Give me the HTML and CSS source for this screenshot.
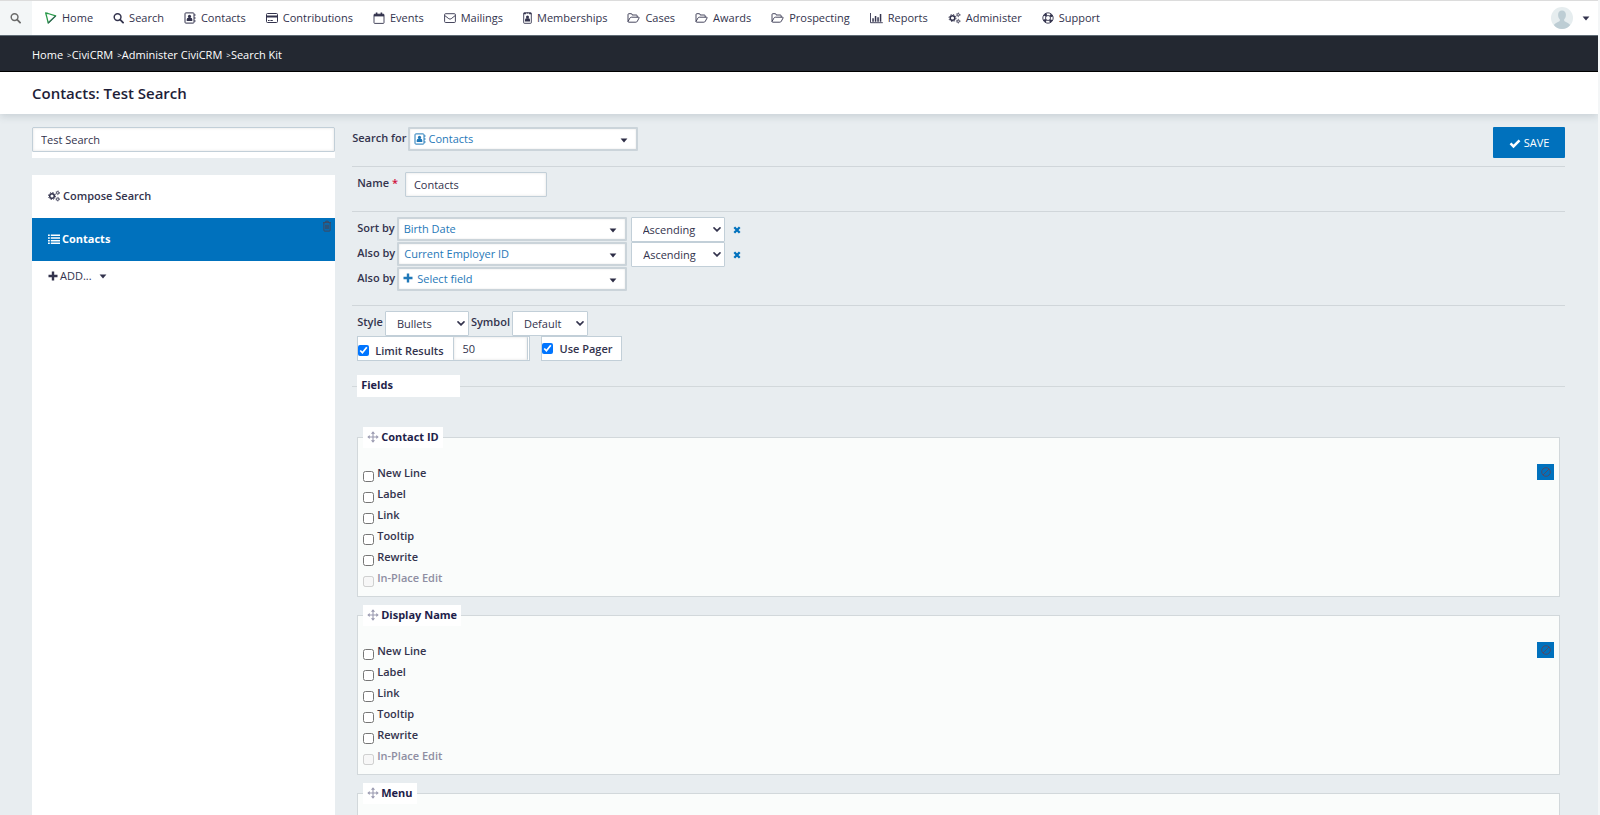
FILE: index.html
```html
<!DOCTYPE html>
<html lang="en">
<head>
<meta charset="utf-8">
<meta name="viewport" content="width=device-width, initial-scale=1">
<title>Contacts: Test Search</title>
<link rel="stylesheet" href="styles.css">
</head>
<body>
	<svg class="sprite" aria-hidden="true">
		<symbol id="i-search" viewBox="0 0 12 12"><circle cx="5" cy="5" r="3.7" fill="none" stroke="currentColor" stroke-width="1.6"/><path d="M7.8 7.8l3.2 3.2" fill="none" stroke="currentColor" stroke-width="2" stroke-linecap="round"/></symbol>
		<symbol id="i-contact" viewBox="0 0 12 12"><rect x="1" y=".9" width="9" height="10.2" rx=".8" fill="none" stroke="currentColor"/><path d="M10.9 2.2v1.6M10.9 5.2v1.6M10.9 8.2v1.6" stroke="currentColor"/><circle cx="5.5" cy="4.4" r="1.6" fill="currentColor"/><path d="M2.7 9V7.6q0-1.6 1.5-1.8h2.6q1.5.2 1.5 1.8V9z" fill="currentColor"/></symbol>
		<symbol id="i-card" viewBox="0 0 12 12"><rect x=".5" y="1.5" width="11" height="9" rx="1" fill="none" stroke="currentColor"/><path d="M.5 3.6h11v2H.5zM2 8h1.6v1H2zM4.4 8h2.4v1H4.4z" fill="currentColor"/></symbol>
		<symbol id="i-calendar" viewBox="0 0 12 12"><rect x="1" y="2.2" width="10" height="9.2" rx=".7" fill="none" stroke="currentColor" stroke-width=".9"/><path d="M1 2.2h10v2.2H1z" fill="currentColor"/><path d="M3.6.6v2.6M8.4.6v2.6" stroke="currentColor" stroke-width="1.6"/></symbol>
		<symbol id="i-mail" viewBox="0 0 12 12"><rect x=".6" y="1.7" width="10.8" height="8.8" rx="1" fill="none" stroke="currentColor" stroke-width=".9"/><path d="M.8 3.6l4 3.1q1.2.9 2.4 0l4-3.1" fill="none" stroke="currentColor" stroke-width=".9"/></symbol>
		<symbol id="i-badge" viewBox="0 0 9 12"><rect x=".7" y=".8" width="7.6" height="10.5" rx=".6" fill="none" stroke="currentColor" stroke-width=".9"/><path d="M.7.8h2.2v1.4H.7zM6.1.8h2.2v1.4H6.1zM3.6.6h1.8v1H3.6z" fill="currentColor"/><circle cx="4.5" cy="5" r="1.5" fill="currentColor"/><path d="M2 9.4V8q0-1.5 1.3-1.7h2.4Q7 6.500 7 8v1.400z" fill="currentColor"/></symbol>
		<symbol id="i-folder" viewBox="0 0 13 12"><path d="M1 9.500V2.600q0-.9.900-.9h2.300q.9 0 .9.900v.4h4.200q.9 0 .9.900v1.300M1 9.500l1.900-3.400q.5-.9 1.400-.9h7.200q1 0 .5.900L10.300 9.300q-.5.900-1.400.9H1.800Q1 10.200 1 9.500z" fill="none" stroke="currentColor" stroke-width=".9" stroke-linejoin="round"/></symbol>
		<symbol id="i-chart" viewBox="0 0 13 12"><path d="M.5 1v9.700h12.300" fill="none" stroke="currentColor" stroke-width=".9"/><path d="M2.300 6.300h1.500v3.400H2.300zM4.800 4h1.500v5.700H4.800zM7.300 5.200h1.500v4.500H7.300zM9.800 2h1.500v7.700H9.800z" fill="currentColor"/></symbol>
		<symbol id="i-cogs" viewBox="0 0 12 12"><circle cx="4" cy="6" r="2.300" fill="none" stroke="currentColor" stroke-width="1.500"/><circle cx="4" cy="6" r="3.500" fill="none" stroke="currentColor" stroke-width="1" stroke-dasharray="1.375 1.375"/><circle cx="9.700" cy="2.800" r="1.200" fill="none" stroke="currentColor" stroke-width=".9"/><circle cx="9.700" cy="2.800" r="1.900" fill="none" stroke="currentColor" stroke-width=".6" stroke-dasharray="1 1"/><circle cx="9.700" cy="9.200" r="1.200" fill="none" stroke="currentColor" stroke-width=".9"/><circle cx="9.700" cy="9.200" r="1.900" fill="none" stroke="currentColor" stroke-width=".6" stroke-dasharray="1 1"/></symbol>
		<symbol id="i-ring" viewBox="0 0 12 12"><circle cx="6" cy="6" r="5.200" fill="none" stroke="currentColor" stroke-width=".9"/><circle cx="6" cy="6" r="2.500" fill="none" stroke="currentColor" stroke-width=".9"/><circle cx="6" cy="6" r="3.900" fill="none" stroke="currentColor" stroke-width="2.600" stroke-dasharray="2.600 3.526" stroke-dashoffset="-1.763"/></symbol>
		<symbol id="i-list" viewBox="0 0 12 12"><path d="M0 1.500h1.800V3H0zM2.800 1.500H12V3H2.800zM0 4.200h1.800v1.500H0zM2.800 4.200H12v1.500H2.800zM0 6.900h1.800v1.500H0zM2.800 6.900H12v1.500H2.800zM0 9.600h1.800v1.500H0zM2.800 9.600H12v1.500H2.800z" fill="currentColor"/></symbol>
		<symbol id="i-plus" viewBox="0 0 10 10"><path d="M5 .5v9M.5 5h9" stroke="currentColor" stroke-width="2.400"/></symbol>
		<symbol id="i-trash" viewBox="0 0 10 12"><path d="M1 2.700h8M3.300 2.500l.5-1.300h2.400l.5 1.300M1.900 2.900v7.400q0 .8.800.8h4.600q.8 0 .8-.8V2.900M3.800 4.700v4.500M5 4.700v4.500M6.200 4.700v4.500" fill="none" stroke="currentColor" stroke-width=".9"/></symbol>
		<symbol id="i-check" viewBox="0 0 12 12"><path d="M1.500 6.400l3 3 6-6" fill="none" stroke="currentColor" stroke-width="2.500"/></symbol>
		<symbol id="i-caret" viewBox="0 0 8 5"><path d="M.6.400h6.800L4 4.400z" fill="currentColor"/></symbol>
		<symbol id="i-chevron" viewBox="0 0 8 5"><path d="M1 .9l3 3 3-3" fill="none" stroke="currentColor" stroke-width="1.600" stroke-linecap="round"/></symbol>
		<symbol id="i-times" viewBox="0 0 8 8"><path d="M1.300 1.300l5.400 5.400M6.700 1.300L1.300 6.700" stroke="currentColor" stroke-width="2.300"/></symbol>
		<symbol id="i-move" viewBox="0 0 12 12"><path d="M6 2v8M2 6h8" stroke="currentColor" stroke-width="1.100"/><path d="M6 .3l2.100 2.400H3.900zM6 11.700l2.100-2.400H3.900zM.3 6l2.400-2.100v4.200zM11.700 6L9.300 3.900v4.200z" fill="currentColor"/></symbol>
		<symbol id="i-ban" viewBox="0 0 12 12"><circle cx="6" cy="6" r="4.300" fill="none" stroke="currentColor"/><path d="M3 9l6-6" stroke="currentColor"/></symbol>
	</svg>

	<header>
		<nav class="menubar">
			<button class="quicksearch" aria-label="Quick search"><svg class="icon small"><use href="#i-search"/></svg></button>
			<ul class="menu">
				<li><a href="#"><svg class="icon logo" viewBox="0 0 12 12"><path d="M1.200 1l2.300.5 7.700 2.400-7.500 7.100-1.200-5.100z" fill="none" stroke="#2a9a4a" stroke-width="1.300" stroke-linejoin="round"/><path d="M11.200 3.900l-7.500 7.100" stroke="#3a6a5a" stroke-width="1.300"/></svg>Home</a></li>
				<li><a href="#"><svg class="icon small"><use href="#i-search"/></svg>Search</a></li>
				<li><a href="#"><svg class="icon"><use href="#i-contact"/></svg>Contacts</a></li>
				<li><a href="#"><svg class="icon"><use href="#i-card"/></svg>Contributions</a></li>
				<li><a href="#"><svg class="icon"><use href="#i-calendar"/></svg>Events</a></li>
				<li><a href="#"><svg class="icon"><use href="#i-mail"/></svg>Mailings</a></li>
				<li><a href="#"><svg class="icon narrow"><use href="#i-badge"/></svg>Memberships</a></li>
				<li><a href="#"><svg class="icon wide"><use href="#i-folder"/></svg>Cases</a></li>
				<li><a href="#"><svg class="icon wide"><use href="#i-folder"/></svg>Awards</a></li>
				<li><a href="#"><svg class="icon wide"><use href="#i-folder"/></svg>Prospecting</a></li>
				<li><a href="#"><svg class="icon wide"><use href="#i-chart"/></svg>Reports</a></li>
				<li><a href="#"><svg class="icon wide"><use href="#i-cogs"/></svg>Administer</a></li>
				<li><a href="#"><svg class="icon"><use href="#i-ring"/></svg>Support</a></li>
			</ul>
			<button class="user" aria-label="User menu">
				<svg class="avatar" viewBox="0 0 22 22"><circle cx="11" cy="11" r="11" fill="#e6edef"/><path d="M11 3.500c2.500 0 3.900 1.700 3.900 4.200 0 2-.7 3.600-1.700 4.600v1.700c1.500 1 4 1.400 6 3.900A11 11 0 0 1 11 22a11 11 0 0 1-8.200-4.100c2-2.500 4.500-2.900 6-3.900v-1.700c-1-1-1.700-2.600-1.700-4.600 0-2.500 1.400-4.200 3.900-4.200z" fill="#bdcdd4"/></svg>
				<svg class="caret"><use href="#i-caret"/></svg>
			</button>
		</nav>
		<div class="breadcrumb">
			<a href="#">Home</a><span>&gt;</span><a href="#">CiviCRM</a><span>&gt;</span><a href="#">Administer CiviCRM</a><span>&gt;</span><a href="#">Search Kit</a>
		</div>
		<h1>Contacts: Test Search</h1>
	</header>

	<form class="content">
		<aside>
			<div class="search-label"><input type="text" value="Test Search" aria-label="Search label"></div>
			<ul class="tabs">
				<li><a href="#"><svg class="icon"><use href="#i-cogs"/></svg>Compose Search</a></li>
				<li class="active"><a href="#"><svg class="icon"><use href="#i-list"/></svg>Contacts</a>
					<button type="button" class="remove-tab" aria-label="Delete display"><svg class="icon"><use href="#i-trash"/></svg></button></li>
				<li><button type="button" class="add"><svg class="plus"><use href="#i-plus"/></svg>ADD...<svg class="caret"><use href="#i-caret"/></svg></button></li>
			</ul>
		</aside>

		<main>
			<div class="toolbar">
				<div class="row">
					<label for="search-for">Search for</label>
					<span class="picker has-icon"><svg class="icon lead"><use href="#i-contact"/></svg><select id="search-for"><option>Contacts</option></select><svg class="caret"><use href="#i-caret"/></svg></span>
				</div>
				<button type="button" class="save"><svg class="icon"><use href="#i-check"/></svg>SAVE</button>
			</div>

			<section>
				<div class="row">
					<label for="name" class="required">Name <span>*</span></label>
					<input id="name" class="name" type="text" value="Contacts">
				</div>
			</section>

			<section>
				<div class="row">
					<label for="sort1">Sort by</label>
					<span class="picker"><select id="sort1"><option>Birth Date</option></select><svg class="caret"><use href="#i-caret"/></svg></span>
					<span class="dropdown direction"><select aria-label="Direction"><option>Ascending</option><option>Descending</option></select><svg class="chevron"><use href="#i-chevron"/></svg></span>
					<button type="button" class="clear" aria-label="Remove"><svg><use href="#i-times"/></svg></button>
				</div>
				<div class="row">
					<label for="sort2">Also by</label>
					<span class="picker"><select id="sort2"><option>Current Employer ID</option></select><svg class="caret"><use href="#i-caret"/></svg></span>
					<span class="dropdown direction"><select aria-label="Direction"><option>Ascending</option><option>Descending</option></select><svg class="chevron"><use href="#i-chevron"/></svg></span>
					<button type="button" class="clear" aria-label="Remove"><svg><use href="#i-times"/></svg></button>
				</div>
				<div class="row">
					<label for="sort3">Also by</label>
					<span class="picker has-icon"><svg class="plus lead"><use href="#i-plus"/></svg><select id="sort3"><option>Select field</option></select><svg class="caret"><use href="#i-caret"/></svg></span>
				</div>
			</section>

			<section class="style">
				<div class="row">
					<label for="style">Style</label>
					<span class="dropdown bullets"><select id="style"><option>Bullets</option><option>Numbers</option></select><svg class="chevron"><use href="#i-chevron"/></svg></span>
					<label for="symbol">Symbol</label>
					<span class="dropdown symbol"><select id="symbol"><option>Default</option></select><svg class="chevron"><use href="#i-chevron"/></svg></span>
				</div>
				<div class="row">
					<div class="group limit">
						<label><input type="checkbox" checked>Limit Results</label>
						<input type="text" value="50" aria-label="Limit">
					</div>
					<div class="group">
						<label><input type="checkbox" checked>Use Pager</label>
					</div>
				</div>
			</section>

			<fieldset class="fields">
				<legend>Fields</legend>

				<fieldset class="field">
					<legend><svg class="icon"><use href="#i-move"/></svg>Contact ID</legend>
					<div class="options">
						<label><input type="checkbox">New Line</label>
						<label><input type="checkbox">Label</label>
						<label><input type="checkbox">Link</label>
						<label><input type="checkbox">Tooltip</label>
						<label><input type="checkbox">Rewrite</label>
						<label class="disabled"><input type="checkbox" disabled>In-Place Edit</label>
					</div>
					<button type="button" class="remove" aria-label="Remove field"><svg class="icon"><use href="#i-ban"/></svg></button>
				</fieldset>

				<fieldset class="field">
					<legend><svg class="icon"><use href="#i-move"/></svg>Display Name</legend>
					<div class="options">
						<label><input type="checkbox">New Line</label>
						<label><input type="checkbox">Label</label>
						<label><input type="checkbox">Link</label>
						<label><input type="checkbox">Tooltip</label>
						<label><input type="checkbox">Rewrite</label>
						<label class="disabled"><input type="checkbox" disabled>In-Place Edit</label>
					</div>
					<button type="button" class="remove" aria-label="Remove field"><svg class="icon"><use href="#i-ban"/></svg></button>
				</fieldset>

				<fieldset class="field">
					<legend><svg class="icon"><use href="#i-move"/></svg>Menu</legend>
					<div class="options"></div>
				</fieldset>
			</fieldset>
		</main>
	</form>
</body>
</html>
```

FILE: styles.css
```css
* {
	box-sizing: border-box;
}
html {
	scrollbar-width: none;
}
body {
	display: flex;
	flex-direction: column;
	height: 100vh;
	margin: 0;
	background: #e8edf0;
	color: #33334d;
	font-family: "Open Sans", sans-serif;
	font-size: 11px;
	line-height: 16px;
	border-right: 2px solid #f4f6f7;
}
ul {
	list-style: none;
	margin: 0;
	padding: 0;
}
a {
	color: inherit;
	text-decoration: none;
}
button,
input,
select {
	font: inherit;
	color: inherit;
	margin: 0;
}
button {
	border: 0;
	padding: 0;
	background: none;
	cursor: pointer;
}
svg {
	display: block;
	flex: none;
}
.sprite {
	display: none;
}
.icon {
	width: 12px;
	height: 12px;
}
.icon.small {
	width: 11px;
}
.icon.narrow {
	width: 9px;
}
.icon.wide {
	width: 13px;
}
.caret,
.chevron {
	width: 8px;
	height: 5px;
}
.plus {
	width: 10px;
	height: 10px;
}

/* top bars */
header {
	flex: none;
	position: relative;
	background: #fff;
	box-shadow: 0 2px 8px rgba(60, 80, 95, .2);
}
.menubar {
	display: flex;
	height: 36px;
	border-top: 1px solid #dcdcdc;
	border-bottom: 1px solid #5f6b75;
}
.quicksearch {
	display: flex;
	align-items: center;
	justify-content: center;
	width: 32px;
	padding-right: 2px;
	background: #f3f6f7;
	color: #6a6a6a;
}
.menu {
	display: flex;
	flex: 1;
	padding-left: 2px;
}
.menu a {
	display: flex;
	align-items: center;
	gap: 5px;
	height: 100%;
	padding: 0 10px;
}
.icon.logo {
	width: 13px;
}
.user {
	display: flex;
	align-items: center;
	gap: 9px;
	padding-right: 8px;
}
.avatar {
	width: 22px;
	height: 22px;
}
.breadcrumb {
	display: flex;
	align-items: center;
	height: 36px;
	padding: 2px 32px 0;
	background: #232831;
	border-bottom: 1px solid #000;
	color: #fff;
	font-weight: 500;
}
.breadcrumb span {
	margin-left: 4px;
	font-size: 8px;
}
h1 {
	margin: 0;
	padding: 11px 32px;
	color: #1e1e38;
	font-size: 15px;
	font-weight: 600;
	line-height: 20px;
}

/* page */
.content {
	display: grid;
	grid-template-columns: 1fr 4fr;
	gap: 17px;
	flex: 1;
	min-height: 0;
	padding: 13px 33px 0 32px;
	overflow: hidden;
}
aside {
	display: flex;
	flex-direction: column;
	min-height: 0;
}
input[type="text"] {
	height: 25px;
	padding: 0 8px;
	border: 1px solid #c2cfd8;
	border-radius: 1px;
	background: #fff;
	box-shadow: inset 0 0 3px rgba(0, 0, 0, .12);
}
input[type="checkbox"] {
	width: 11px;
	height: 11px;
}
.search-label {
	margin-bottom: 17px;
	padding-bottom: 6px;
	background: #fff;
}
.search-label input {
	display: block;
	width: 100%;
}
.tabs {
	flex: 1;
	background: #fff;
}
.tabs li {
	position: relative;
}
.tabs a {
	display: flex;
	align-items: center;
	gap: 3px;
	height: 43px;
	padding: 0 16px 2px;
	font-weight: 600;
}
.tabs .active {
	background: #0071bd;
	color: #fff;
}
.tabs .active a {
	gap: 2px;
	font-weight: 700;
}
.remove-tab {
	position: absolute;
	top: 2px;
	right: 2px;
	color: #4a4250;
}
.add {
	display: flex;
	align-items: center;
	gap: 2px;
	padding: 7px 16px;
}
.add .caret {
	margin-left: 5px;
}

main {
	min-width: 0;
}
.toolbar {
	display: flex;
	justify-content: space-between;
	align-items: flex-start;
	height: 39px;
}
.row {
	display: flex;
	gap: 2px;
}
label,
legend {
	font-weight: 600;
}
.row > label {
	line-height: 22px;
}
.save {
	display: flex;
	align-items: center;
	justify-content: center;
	gap: 3px;
	width: 72px;
	height: 31px;
	border-radius: 1px;
	background: #0071bd;
	color: #fff;
	font-weight: 500;
}
section {
	padding: 5px 5px 13px;
	border-top: 1px solid #d0d6da;
}
section.style {
	padding-bottom: 14px;
}
.required span {
	color: #d0103a;
	margin-right: 5px;
}
.name {
	width: 142px;
	margin-bottom: 1px;
}

/* drop-downs */
.picker,
.dropdown {
	position: relative;
	height: 25px;
}
.picker {
	width: 230px;
	height: 24px;
	margin: 0 2px 1px 0;
	color: #1f78b8;
}
.picker select,
.dropdown select {
	appearance: none;
	width: 100%;
	height: 100%;
	border: 1px solid #c2cfd8;
	border-radius: 1px;
	background: #fff;
}
.picker select {
	padding: 0 5px;
	border-width: 2px;
	border-color: #cbd4da;
	box-shadow: inset 0 0 2px rgba(0, 0, 0, .12);
}
.picker.has-icon select {
	padding-left: 18px;
}
.picker .lead {
	position: absolute;
	left: 6px;
	top: 6px;
}
.picker .caret {
	position: absolute;
	right: 10px;
	top: 11px;
	color: #2c2c45;
}
.dropdown select {
	padding: 0 11px;
}
.dropdown .chevron {
	position: absolute;
	right: 4px;
	top: 10px;
}
.direction {
	width: 94px;
}
.bullets {
	width: 84px;
}
.symbol {
	width: 76px;
}
.clear {
	width: 20px;
	color: #0071bd;
}
.clear svg {
	width: 8px;
	height: 8px;
	margin: auto;
}

.group {
	display: flex;
	height: 25px;
	border: 1px solid #c2cfd8;
	background: #fff;
}
.group label {
	display: flex;
	align-items: center;
	gap: 6px;
	padding-right: 8px;
}
.limit {
	margin-right: 9px;
	padding-right: 1px;
}
.limit label {
	padding: 4px 10px 0 0;
}
.limit input[type="text"] {
	width: 75px;
	height: 23px;
	border-width: 0 1px;
}

/* result fields */
fieldset {
	min-width: 0;
	margin: 0;
	border: 0 solid #d2d8db;
}
legend {
	background: #fff;
	color: #1e1e4a;
	font-weight: 700;
}
.fields {
	padding: 30px 5px 0;
	border-top-width: 1px;
}
.fields > legend {
	width: 103px;
	padding: 2px 4px 4px;
}
.field {
	display: flex;
	justify-content: space-between;
	align-items: flex-start;
	margin-bottom: 8px;
	padding: 15px 5px 7px;
	border-width: 1px;
	background: #fafcfb;
}
.field legend {
	display: flex;
	align-items: center;
	gap: 2px;
	height: 21px;
	padding: 0 4px 1px;
}
.field legend .icon {
	color: #9a9ab0;
}
.options label {
	display: flex;
	align-items: center;
	gap: 3px;
	height: 21px;
	padding-bottom: 2px;
}
.options input {
	align-self: flex-end;
}
.options .disabled {
	color: #8e8ea2;
}
.remove {
	display: flex;
	align-items: center;
	justify-content: center;
	width: 17px;
	height: 16px;
	margin-top: 1px;
	background: #0071bd;
	color: #4f4a66;
}
```
